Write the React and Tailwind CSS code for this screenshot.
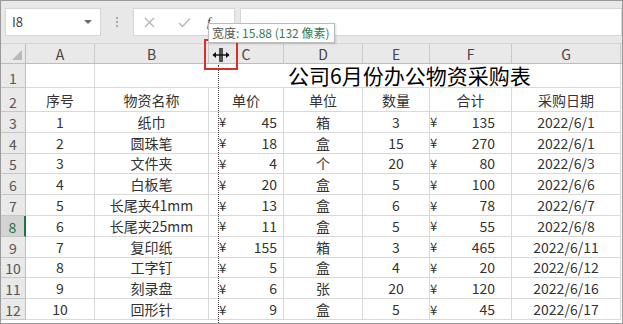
import React from "react";

const COLS = [
  { key: "A", w: 69 },
  { key: "B", w: 114 },
  { key: "C", w: 75 },
  { key: "D", w: 79 },
  { key: "E", w: 67 },
  { key: "F", w: 82 },
  { key: "G", w: 109 },
];

const ROWS = [
  ["1", "纸巾", "45", "箱", "3", "135", "2022/6/1"],
  ["2", "圆珠笔", "18", "盒", "15", "270", "2022/6/1"],
  ["3", "文件夹", "4", "个", "20", "80", "2022/6/3"],
  ["4", "白板笔", "20", "盒", "5", "100", "2022/6/6"],
  ["5", "长尾夹41mm", "13", "盒", "6", "78", "2022/6/7"],
  ["6", "长尾夹25mm", "11", "盒", "5", "55", "2022/6/8"],
  ["7", "复印纸", "155", "箱", "3", "465", "2022/6/11"],
  ["8", "工字钉", "5", "盒", "4", "20", "2022/6/12"],
  ["9", "刻录盘", "6", "张", "20", "120", "2022/6/16"],
  ["10", "回形针", "9", "盒", "5", "45", "2022/6/17"],
];

const HEADS = ["序号", "物资名称", "单价", "单位", "数量", "合计", "采购日期"];

const font = { fontFamily: '"Noto Sans CJK SC", "Noto Sans", sans-serif' };

const RowLabel = ({ n, selected }) => (
  <div
    className={
      "w-[25px] shrink-0 flex items-end justify-center border-b text-[14px] leading-none " +
      (selected
        ? "bg-[#d3d3d3] text-[#217346] border-b-[#c6c6c6] border-r-2 border-r-[#217346]"
        : "bg-[#e9e9e9] text-[#555] border-b-[#c6c6c6] border-r border-r-[#bdbdbd]")
    }
  >
    <span className="pb-[2px]">{n}</span>
  </div>
);

const Money = ({ w, value, pl, pr }) => (
  <div
    className="shrink-0 flex items-center justify-between border-r border-b border-[#d9d9d9] leading-none"
    style={{ width: w, paddingLeft: pl, paddingRight: pr }}
  >
    <span className="text-[13px]">¥</span>
    <span>{value}</span>
  </div>
);

const Cell = ({ w, children }) => (
  <div
    className="shrink-0 flex items-center justify-center border-r border-b border-[#d9d9d9] whitespace-nowrap leading-none"
    style={{ width: w }}
  >
    {children}
  </div>
);

export default function App() {
  return (
    <div
      className="relative w-[623px] h-[324px] overflow-hidden bg-white border border-[#9a9a9a] text-[#333]"
      style={font}
    >
      {/* toolbar */}
      <div className="h-[43px] bg-[#e8e8e8] flex items-start pt-[7px] border-b border-[#d4d4d4]">
        <div className="ml-[4px] w-[96px] h-[28px] bg-white border border-[#d6d6d6] flex items-center justify-between pl-[6px] pr-[8px]">
          <span className="text-[13px] text-[#444]">I8</span>
          <span className="w-0 h-0 border-l-[4px] border-r-[4px] border-t-[4px] border-l-transparent border-r-transparent border-t-[#6b6b6b]" />
        </div>
        <div className="w-[32px] h-[28px] flex flex-col items-center justify-center gap-[2px]">
          <span className="w-[2px] h-[2px] bg-[#a8a8a8]" />
          <span className="w-[2px] h-[2px] bg-[#a8a8a8]" />
          <span className="w-[2px] h-[2px] bg-[#a8a8a8]" />
        </div>
        <div className="w-[102px] h-[28px] bg-white border border-[#d6d6d6] flex items-center pl-[9px]">
          <svg width="11" height="11" viewBox="0 0 11 11" className="ml-[1px]">
            <path d="M1 1 L10 10 M10 1 L1 10" stroke="#b5b5b5" strokeWidth="1.3" />
          </svg>
          <svg width="13" height="11" viewBox="0 0 13 11" className="ml-[23px]">
            <path d="M1 6 L4.5 9.5 L12 1.5" stroke="#b5b5b5" strokeWidth="1.4" fill="none" />
          </svg>
          <span className="ml-[16px] text-[13px] italic text-[#333]" style={{ fontFamily: '"Liberation Serif", serif' }}>
            f
          </span>
        </div>
        <div className="ml-[5px] w-[382px] h-[28px] bg-white border border-[#d6d6d6]" />
      </div>

      {/* column header */}
      <div className="flex h-[20px] bg-[#e9e9e9] border-b border-[#bdbdbd] leading-none">
        <div className="w-[25px] shrink-0 relative border-r border-[#bdbdbd]">
          <svg width="10" height="10" viewBox="0 0 10 10" className="absolute right-[3px] bottom-[3px]">
            <path d="M10 0 L10 10 L0 10 Z" fill="#b8b8b8" />
          </svg>
        </div>
        {COLS.map((c) => (
          <div
            key={c.key}
            className="shrink-0 flex items-center justify-center border-r border-[#c9c9c9] text-[14px] text-[#444]"
            style={{ width: c.w }}
          >
            {c.key}
          </div>
        ))}
      </div>

      {/* row 1 */}
      <div className="flex h-[24px]">
        <RowLabel n="1" />
        <div className="w-[69px] shrink-0 border-r border-b border-[#d9d9d9]" />
        <div className="w-[526px] shrink-0 border-r border-b border-[#d9d9d9] flex items-end pb-[2px] pl-[193px] text-[21px] text-black leading-[20px] whitespace-nowrap">
          公司6月份办公物资采购表
        </div>
      </div>

      {/* row 2 */}
      <div className="flex h-[24px] text-[14px]">
        <RowLabel n="2" />
        {HEADS.map((h, i) => (
          <Cell key={h} w={COLS[i].w}>
            {h}
          </Cell>
        ))}
      </div>

      {ROWS.map((r, idx) => (
        <div key={idx} className="flex h-[20.8px] text-[14px]">
          <RowLabel n={String(idx + 3)} selected={idx + 3 === 8} />
          <Cell w={69}>{r[0]}</Cell>
          <Cell w={114}>{r[1]}</Cell>
          <Money w={75} value={r[2]} pl={10} pr={6} />
          <Cell w={79}>{r[3]}</Cell>
          <Cell w={67}>{r[4]}</Cell>
          <Money w={82} value={r[5]} pl={0} pr={16} />
          <Cell w={109}>{r[6]}</Cell>
        </div>
      ))}

      {/* resize preview line */}
      <div className="absolute left-[217px] top-[64px] bottom-0 border-l border-dotted border-[#444]" />

      {/* red highlight box with resize cursor */}
      <div className="absolute left-[203px] top-[38px] w-[34px] h-[31px] border-2 border-[#d8312b] flex items-center justify-center">
        <svg width="18" height="14" viewBox="0 0 18 14">
          <path d="M8 0 V14 M10 0 V14" stroke="#111" strokeWidth="1.4" />
          <path d="M1 7 H17" stroke="#111" strokeWidth="1.4" />
          <path d="M0.5 7 L4 4 V10 Z M17.5 7 L14 4 V10 Z" fill="#111" />
        </svg>
      </div>

      {/* tooltip */}
      <div className="absolute left-[207px] top-[22px] h-[20px] pl-[3px] pr-[5px] bg-white border border-[#bcbcbc] flex items-center text-[12px] leading-none whitespace-nowrap shadow-[1px_1px_2px_rgba(0,0,0,0.15)]">
        <span className="text-[#555]">宽度</span>
        <span className="text-[#3b7a4b]">: 15.88 (132 像素)</span>
      </div>
    </div>
  );
}
